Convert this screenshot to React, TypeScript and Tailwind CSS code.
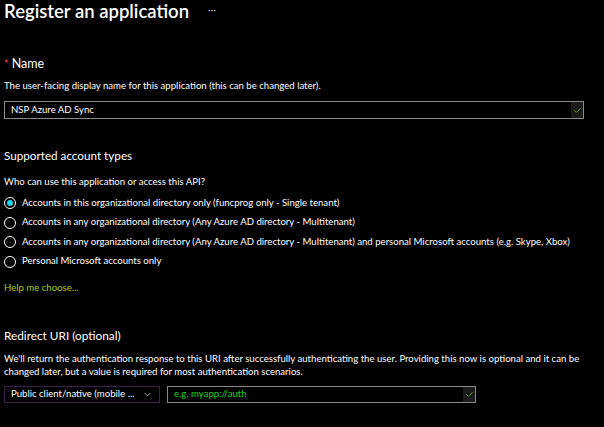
import { Check, ChevronDown } from 'lucide-react'

const accountTypes = [
  'Accounts in this organizational directory only (funcprog only - Single tenant)',
  'Accounts in any organizational directory (Any Azure AD directory - Multitenant)',
  'Accounts in any organizational directory (Any Azure AD directory - Multitenant) and personal Microsoft accounts (e.g. Skype, Xbox)',
  'Personal Microsoft accounts only',
]

function Radio({ checked }: { checked: boolean }) {
  return (
    <span className="w-[12px] h-[12px] rounded-full border border-white flex items-center justify-center shrink-0">
      {checked && <span className="w-[6px] h-[6px] rounded-full bg-[#16d6f0]" />}
    </span>
  )
}

export default function App() {
  return (
    <div className="w-[604px] h-[427px] bg-black text-white overflow-hidden px-[4px] font-['Lato',sans-serif]">
      {/* Header */}
      <div className="flex items-center h-[24px] mt-[-1px]">
        <h1 className="text-[18.5px] font-semibold leading-none whitespace-nowrap">Register an application</h1>
        <span className="ml-[19px] text-[10px] text-gray-300 leading-none mb-[4px]">···</span>
      </div>

      {/* Name */}
      <div className="mt-[35px]">
        <p className="text-[12.5px] leading-none flex items-baseline">
          <span className="text-[#ff4343] text-[11px] mr-[3px]">*</span>Name
        </p>
        <p className="text-[9.6px] mt-[10px] leading-none">
          The user-facing display name for this application (this can be changed later).
        </p>
        <div className="mt-[11px] w-[580px] h-[18px] border border-[#8a8a8a] flex items-center pl-[6px]">
          <span className="text-[9.6px] flex-1">NSP Azure AD Sync</span>
          <span className="h-full w-[12px] bg-[#1b1b1b] flex items-center justify-center">
            <Check size={9} strokeWidth={2} className="text-[#5cb82c]" />
          </span>
        </div>
      </div>

      {/* Account types */}
      <div className="mt-[31px]">
        <p className="text-[11.7px] leading-none">Supported account types</p>
        <p className="text-[9.6px] mt-[15px] leading-none">Who can use this application or access this API?</p>
        <div className="mt-[7px] flex flex-col">
          {accountTypes.map((t, i) => (
            <label key={t} className="flex items-center gap-[6px] text-[9.6px] h-[19.5px] whitespace-nowrap">
              <Radio checked={i === 0} />
              <span>{t}</span>
            </label>
          ))}
        </div>
        <p className="mt-[12px] text-[9.6px] leading-none text-[#a6cc00]">Help me choose...</p>
      </div>

      {/* Redirect */}
      <div className="mt-[37px]">
        <p className="text-[11.8px] leading-none">Redirect URI (optional)</p>
        <p className="text-[9.6px] mt-[10px] leading-[13px] w-[582px]">
          We'll return the authentication response to this URI after successfully authenticating the user. Providing this now is optional and it can be changed later, but a value is required for most authentication scenarios.
        </p>
        <div className="mt-[8px] flex gap-[7px]">
          <div className="w-[156px] h-[17px] border border-[#3d1f4a] flex items-center pl-[6px] pr-[6px]">
            <span className="text-[9.6px] flex-1 whitespace-nowrap overflow-hidden">Public client/native (mobile ...</span>
            <ChevronDown size={11} strokeWidth={1.5} className="ml-[6px] shrink-0" />
          </div>
          <div className="w-[309px] h-[17px] border border-[#8a8a8a] flex items-center pl-[6px]">
            <span className="text-[9.6px] flex-1 text-[#1fd01f]">e.g. myapp://auth</span>
            <span className="h-full w-[12px] bg-[#1b1b1b] flex items-center justify-center">
              <Check size={9} strokeWidth={2} className="text-[#5cb82c]" />
            </span>
          </div>
        </div>
      </div>
    </div>
  )
}
